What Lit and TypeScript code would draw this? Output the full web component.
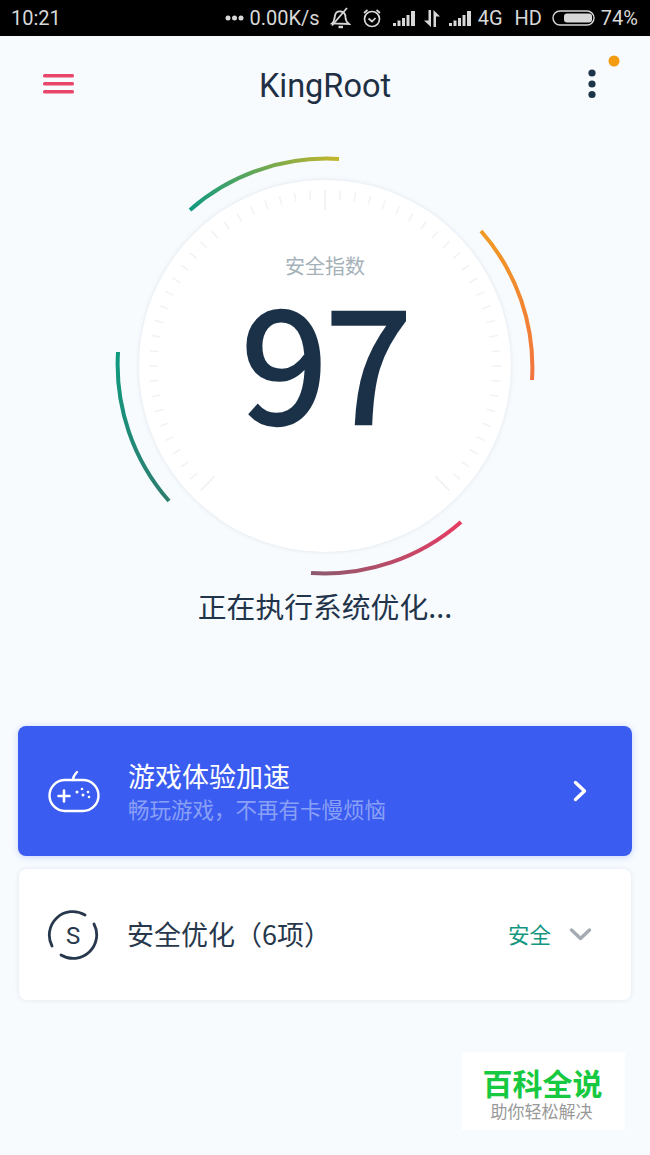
import { LitElement, css, html, svg } from 'lit';
import { customElement } from 'lit/decorators.js';

const CX = 210;
const CY = 210;

// dial ticks, every 5 degrees over a 270 degree sweep
function tick(deg: number) {
  const long = deg === 0 || deg === -135 || deg === 135;
  const a = ((deg - 90) * Math.PI) / 180;
  const r1 = 176;
  const r2 = long ? 156 : 167;
  return svg`<line x1=${CX + r1 * Math.cos(a)} y1=${CY + r1 * Math.sin(a)}
    x2=${CX + r2 * Math.cos(a)} y2=${CY + r2 * Math.sin(a)}
    stroke=${long ? '#edeff1' : '#f1f2f4'} stroke-width="1.5" />`;
}

const ticks: number[] = [];
for (let d = -135; d <= 135; d += 5) ticks.push(d);

const signal = svg`
  <rect x="0" y="12" width="3" height="3" />
  <rect x="4.500" y="9.500" width="3" height="5.500" />
  <rect x="9" y="7" width="3" height="8" />
  <rect x="13.500" y="4" width="3" height="11" />
  <rect x="18" y="0" width="4" height="15" />
`;

@customElement('app-root')
export class AppRoot extends LitElement {
  static get styles() {
    return css`
      :host {
        display: block;
        width: 650px;
        height: 1155px;
        overflow: hidden;
        position: relative;
        background: #f7fbfe;
        font-family: "Noto Sans CJK SC", "Noto Sans", sans-serif;
        color: #1c3045;
      }

      .status {
        height: 36px;
        background: #000;
        color: #d8d8d8;
        display: flex;
        align-items: center;
        justify-content: space-between;
        padding: 0 12px 0 11px;
        font-family: Roboto, sans-serif;
        font-size: 20px;
      }

      .status-right {
        display: flex;
        align-items: center;
      }

      .status svg {
        display: block;
      }

      .speed {
        display: flex;
        align-items: center;
        gap: 6px;
        margin-right: 10px;
      }

      .ic-bell { margin-right: 12px; }
      .ic-alarm { margin-right: 12px; }
      .ic-signal { margin-right: 9px; }
      .ic-arrows { margin-right: 9px; }
      .ic-signal.last { margin-right: 7px; }
      .ic-battery { margin-right: 6px; }

      .network {
        margin-right: 10px;
        word-spacing: 7px;
      }

      .header {
        height: 120px;
        box-sizing: border-box;
        position: relative;
        display: flex;
        justify-content: center;
        padding-top: 27px;
      }

      .title {
        font-family: Roboto, sans-serif;
        font-size: 32.500px;
        line-height: 46px;
        height: 46px;
        color: #1f2f44;
      }

      .menu {
        position: absolute;
        left: 43px;
        top: 38px;
      }

      .more {
        position: absolute;
        left: 580px;
        top: 18px;
      }

      .gauge {
        position: relative;
        width: 420px;
        height: 420px;
        margin-left: 115px;
      }

      .gauge svg {
        display: block;
      }

      .dial {
        filter: drop-shadow(0 0 2px rgba(40, 60, 90, 0.12));
      }

      .gauge-label {
        position: absolute;
        top: 95px;
        left: 0;
        right: 0;
        text-align: center;
        font-size: 20px;
        line-height: 30px;
        color: #a5b1b9;
      }

      .score {
        position: absolute;
        top: 110px;
        left: 0;
        right: 0;
        text-align: center;
        font-size: 157px;
        line-height: 180px;
        letter-spacing: -3px;
        -webkit-text-stroke: 2.500px #1a3148;
        color: #1a3148;
      }

      .state {
        margin-top: 10px;
        text-align: center;
        font-size: 28.800px;
        line-height: 40px;
        color: #22344a;
      }

      .cards {
        margin-top: 100px;
        padding: 0 18px;
        display: flex;
        flex-direction: column;
        gap: 13px;
      }

      .card {
        display: flex;
        align-items: center;
        height: 130px;
        border-radius: 8px;
        padding: 0 30px;
        box-sizing: border-box;
      }

      .card.boost {
        background: #3a5cf0;
        box-shadow: 0 1px 6px rgba(58, 92, 240, 0.25);
        color: #fff;
      }

      .card.safe {
        background: #fff;
        height: 131px;
        margin: 0 1px;
        padding-left: 28px;
        box-shadow: 0 0 5px rgba(30, 50, 80, 0.1);
        color: #27384c;
      }

      .card svg {
        display: block;
        flex: none;
      }

      .card-body {
        margin-left: 28px;
        flex: 1;
      }

      .card-title {
        font-size: 27px;
        line-height: 38px;
        margin-top: -2px;
      }

      .card-sub {
        font-size: 21.500px;
        line-height: 28px;
        color: #8aa0f6;
      }

      .safe-title {
        font-size: 27px;
        line-height: 38px;
        margin-top: -2px;
      }

      .safe-state {
        font-size: 21.500px;
        color: #13967f;
        margin-right: 18px;
        margin-top: -2px;
      }

      .go {
        margin-right: 14px;
      }

      .expand {
        margin-right: 9px;
      }

      .watermark {
        position: absolute;
        left: 462px;
        top: 1052px;
        width: 163px;
        height: 78px;
        background: #fff;
        text-align: center;
      }

      .wm-title {
        margin-top: 13px;
        margin-left: -2px;
        font-size: 30px;
        line-height: 34px;
        font-weight: 700;
        color: #17c940;
      }

      .wm-sub {
        margin-top: 1px;
        margin-left: -4px;
        font-size: 17px;
        line-height: 22px;
        color: #999;
      }
    `;
  }

  renderStatus() {
    return html`
      <div class="status">
        <span>10:21</span>
        <div class="status-right">
          <div class="speed">
            <svg width="19" height="6" viewBox="0 0 19 6" fill="#d8d8d8">
              <circle cx="3" cy="3" r="2.500" /><circle cx="9.500" cy="3" r="2.500" /><circle cx="16" cy="3" r="2.500" />
            </svg>
            <span>0.00K/s</span>
          </div>
          <svg class="ic-bell" width="21" height="22" viewBox="0 0 21 22" fill="none" stroke="#d8d8d8" stroke-width="1.800">
            <path d="M2 16.500c2.500-2 2.500-5 3-8 .6-3 3-4.500 6-4s4.500 3 4.500 6c0 3 1 4.500 3.500 6.500z" />
            <path d="M8.500 20h4.500" stroke-width="2.400" />
            <path d="M2 18.500L17 1" />
          </svg>
          <svg class="ic-alarm" width="18" height="20" viewBox="0 0 18 20" fill="none" stroke="#d8d8d8" stroke-width="1.700">
            <circle cx="9" cy="11" r="7.500" />
            <path d="M5.500 10.500l3.500 3 3.500-3.500" />
            <path d="M1 5l3.500-3M17 5l-3.500-3" />
          </svg>
          <svg class="ic-signal" width="22" height="15" viewBox="0 0 22 15" fill="#d8d8d8">${signal}</svg>
          <svg class="ic-arrows" width="16" height="17" viewBox="0 0 16 17" fill="#d8d8d8">
            <path d="M4.500 0h2.500v17L0 10.500h4.500zM9.500 0L16 6.500h-4V17H9.500z" />
          </svg>
          <svg class="ic-signal last" width="22" height="15" viewBox="0 0 22 15" fill="#d8d8d8">${signal}</svg>
          <span class="network">4G HD</span>
          <svg class="ic-battery" width="43" height="16" viewBox="0 0 43 16">
            <rect x="1" y="1" width="41" height="14" rx="7" fill="none" stroke="#d8d8d8" stroke-width="1.400" />
            <rect x="12" y="3.500" width="28" height="9" rx="3" fill="#d8d8d8" />
          </svg>
          <span>74%</span>
        </div>
      </div>
    `;
  }

  renderGauge() {
    return html`
      <div class="gauge">
        <svg width="420" height="420" viewBox="0 0 420 420" fill="none">
          <defs>
            <linearGradient id="arc-top" gradientUnits="userSpaceOnUse" x1="75" y1="54" x2="224" y2="3">
              <stop offset="0" stop-color="#0f9a80" /><stop offset="1" stop-color="#c4b62a" />
            </linearGradient>
            <linearGradient id="arc-right" gradientUnits="userSpaceOnUse" x1="366" y1="75" x2="417" y2="224">
              <stop offset="0" stop-color="#f09a22" /><stop offset="1" stop-color="#f2743f" />
            </linearGradient>
            <linearGradient id="arc-bottom" gradientUnits="userSpaceOnUse" x1="346" y1="366" x2="196" y2="417">
              <stop offset="0" stop-color="#e63c62" /><stop offset="1" stop-color="#8c5a6e" />
            </linearGradient>
            <linearGradient id="arc-left" gradientUnits="userSpaceOnUse" x1="3" y1="196" x2="54" y2="345">
              <stop offset="0" stop-color="#0f9a80" /><stop offset="1" stop-color="#2e7d6e" />
            </linearGradient>
          </defs>
          <circle class="dial" cx=${CX} cy=${CY} r="186" fill="#fff" />
          ${ticks.map(tick)}
          <path d="M75 54A207 207 0 0 1 224 3" stroke="url(#arc-top)" stroke-width="4" />
          <path d="M366 75A207 207 0 0 1 417 224" stroke="url(#arc-right)" stroke-width="4" />
          <path d="M346 366A207 207 0 0 1 196 417" stroke="url(#arc-bottom)" stroke-width="4" />
          <path d="M54 345A207 207 0 0 1 3 196" stroke="url(#arc-left)" stroke-width="4" />
        </svg>
        <div class="gauge-label">安全指数</div>
        <div class="score">97</div>
      </div>
    `;
  }

  render() {
    return html`
      ${this.renderStatus()}
      <div class="header">
        <svg class="menu" width="31" height="20" viewBox="0 0 31 20" fill="#e8476a">
          <rect x="0" y="0" width="31" height="3.400" rx="1.500" />
          <rect x="0" y="8" width="31" height="3.400" rx="1.500" />
          <rect x="0" y="16" width="31" height="3.400" rx="1.500" />
        </svg>
        <div class="title">KingRoot</div>
        <svg class="more" width="44" height="50" viewBox="0 0 44 50">
          <circle cx="12" cy="19" r="3.600" fill="#1d3349" />
          <circle cx="12" cy="30" r="3.600" fill="#1d3349" />
          <circle cx="12" cy="40.500" r="3.600" fill="#1d3349" />
          <circle cx="34" cy="7" r="5.500" fill="#f39c12" />
        </svg>
      </div>
      ${this.renderGauge()}
      <div class="state">正在执行系统优化...</div>
      <div class="cards">
        <div class="card boost">
          <svg width="52" height="44" viewBox="0 0 52 44" fill="none" stroke="#fff" stroke-width="2.400" stroke-linecap="round">
            <rect x="1.500" y="11" width="49" height="31" rx="15.500" />
            <path d="M25 11c0-3 2-6 4-8" />
            <path d="M10.500 27h11M16 21.500v11" stroke-width="2.600" />
            <g fill="#fff" stroke="none">
              <circle cx="29" cy="23" r="1.500" /><circle cx="34" cy="20" r="1.300" />
              <circle cx="35" cy="26" r="1.500" /><circle cx="40" cy="23" r="1.300" />
              <circle cx="41" cy="28" r="1.300" />
            </g>
          </svg>
          <div class="card-body">
            <div class="card-title">游戏体验加速</div>
            <div class="card-sub">畅玩游戏，不再有卡慢烦恼</div>
          </div>
          <svg class="go" width="16" height="22" viewBox="0 0 16 22" fill="none" stroke="#fff" stroke-width="3.400" stroke-linecap="round" stroke-linejoin="round">
            <path d="M3.500 2.500L12.500 11l-9 8.500" />
          </svg>
        </div>
        <div class="card safe">
          <svg width="52" height="52" viewBox="0 0 52 52" fill="none" stroke="#27384c" stroke-width="2.800" stroke-linecap="round">
            <path d="M38 6A23.500 23.500 0 0 0 5 37" />
            <path d="M14 46A23.500 23.500 0 0 0 47 15" />
            <text x="26" y="34.500" text-anchor="middle" font-family="Roboto, sans-serif" font-size="24" fill="#27384c" stroke="none">S</text>
          </svg>
          <div class="card-body safe-title">安全优化（6项）</div>
          <div class="safe-state">安全</div>
          <svg class="expand" width="23" height="15" viewBox="0 0 23 15" fill="none" stroke="#a4abb2" stroke-width="3.400" stroke-linecap="round" stroke-linejoin="round">
            <path d="M2.500 3L11.500 11.500l9-8.500" />
          </svg>
        </div>
      </div>
      <div class="watermark">
        <div class="wm-title">百科全说</div>
        <div class="wm-sub">助你轻松解决</div>
      </div>
    `;
  }
}
